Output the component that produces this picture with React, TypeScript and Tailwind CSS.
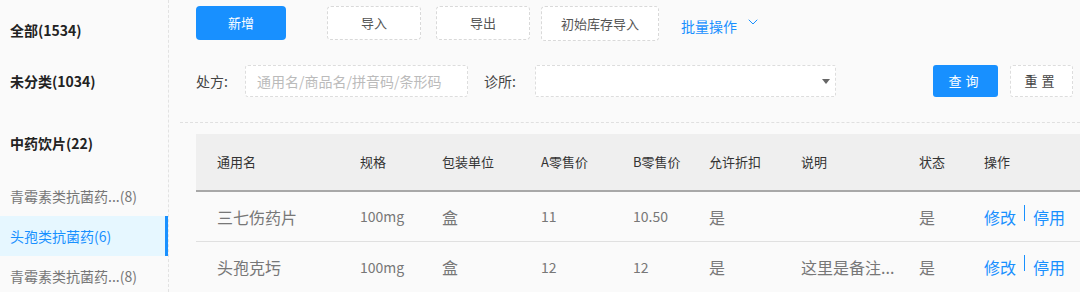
import { ChevronDown } from 'lucide-react';

const categories = [
    { label: '全部(1534)', bold: true, h: 'h-[51px]' },
    { label: '未分类(1034)', bold: true, h: 'h-[51px]' },
];

const rows = [
    { name: '三七伤药片', spec: '100mg', unit: '盒', a: '11', b: '10.50', discount: '是', note: '', status: '是' },
    { name: '头孢克圬', spec: '100mg', unit: '盒', a: '12', b: '12', discount: '是', note: '这里是备注...', status: '是' },
];

export default function App() {
    return (
        <div
            className="flex h-[292px] w-[1080px] overflow-hidden bg-[#fafafa] text-[#333]"
            style={{ fontFamily: '"Noto Sans CJK SC", "Noto Sans", sans-serif' }}
        >
            {/* Sidebar */}
            <aside className="w-[169px] shrink-0 border-r border-dashed border-[#e2e2e2] pt-[5px]">
                {categories.map((c) => (
                    <div key={c.label} className={`${c.h} flex items-center pl-[10px] text-[14px] font-bold text-[#222]`}>
                        {c.label}
                    </div>
                ))}
                <div className="mt-[11px] flex h-[51px] items-center pl-[10px] text-[14px] font-bold text-[#222]">中药饮片(22)</div>
                <div className="mt-[7px] flex h-[40px] items-center pl-[10px] text-[14px] text-[#777]">青霉素类抗菌药...(8)</div>
                <div className="flex h-[40px] items-center border-r-[3px] border-[#1890ff] bg-[#e6f7ff] pl-[10px] text-[14px] text-[#1890ff]">
                    头孢类抗菌药(6)
                </div>
                <div className="flex h-[40px] items-center pl-[10px] text-[14px] text-[#777]">青霉素类抗菌药...(8)</div>
            </aside>

            {/* Main */}
            <main className="flex-1 pl-[11px]">
                {/* Toolbar */}
                <div className="flex h-[46px] items-start pl-[16px] pt-[6px]">
                    <button className="h-[34px] w-[90px] rounded-[4px] bg-[#1890ff] text-[13px] text-white">新增</button>
                    <button className="ml-[41px] h-[34px] w-[94px] rounded-[4px] border border-dashed border-[#d9d9d9] bg-white text-[13px] text-[#555]">导入</button>
                    <button className="ml-[15px] h-[34px] w-[94px] rounded-[4px] border border-dashed border-[#d9d9d9] bg-white text-[13px] text-[#555]">导出</button>
                    <button className="ml-[11px] h-[35px] w-[118px] rounded-[4px] border border-dashed border-[#d9d9d9] bg-white text-[13px] text-[#555]">初始库存导入</button>
                    <div className="ml-[22px] flex h-[40px] items-center text-[14px] text-[#1890ff]">
                        批量操作
                        <ChevronDown className="ml-[8px] -mt-[8px] h-[16px] w-[16px]" strokeWidth={1.5} />
                    </div>
                </div>

                {/* Filter */}
                <div className="mt-[19px] flex h-[32px] items-center pl-[16px]">
                    <span className="w-[49px] text-[14px] text-[#444]">处方:</span>
                    <input
                        className="h-[32px] w-[223px] rounded-[3px] border border-dashed border-[#ddd] bg-white px-[11px] text-[14px] placeholder-[#bbb] outline-none"
                        placeholder="通用名/商品名/拼音码/条形码"
                    />
                    <span className="ml-[16px] w-[51px] text-[14px] text-[#444]">诊所:</span>
                    <div className="flex h-[32px] w-[301px] items-center justify-end rounded-[2px] border border-dashed border-[#ddd] bg-white pr-[5px]">
                        <span className="h-0 w-0 border-x-[4px] border-t-[5px] border-x-transparent border-t-[#666]" />
                    </div>
                    <button className="ml-[97px] h-[32px] w-[65px] rounded-[3px] bg-[#1890ff] text-[13px] tracking-[4px] text-white">查询</button>
                    <button className="ml-[12px] h-[32px] w-[63px] rounded-[3px] border border-dashed border-[#ddd] bg-white text-[13px] tracking-[4px] text-[#444]">重置</button>
                </div>

                {/* Divider */}
                <div className="mt-[25px] border-t border-dashed border-[#e0e0e0]" />

                {/* Table */}
                <div className="ml-[16px] mt-[11px]">
                    <div className="flex h-[58px] items-center border-b-[2px] border-[#a8a8a8] bg-[#efefef] text-[13px] text-[#333]">
                        <div className="w-[164px] pl-[21px]">通用名</div>
                        <div className="w-[82px]">规格</div>
                        <div className="w-[99px]">包装单位</div>
                        <div className="w-[92px]">A零售价</div>
                        <div className="w-[76px]">B零售价</div>
                        <div className="w-[92px]">允许折扣</div>
                        <div className="w-[118px]">说明</div>
                        <div className="w-[65px]">状态</div>
                        <div>操作</div>
                    </div>
                    {rows.map((r, i) => (
                        <div
                            key={r.name}
                            className={`flex h-[50px] items-center text-[16px] text-[#777] ${i === 0 ? 'border-b border-[#e0e0e0]' : ''}`}
                        >
                            <div className="w-[164px] pl-[21px]">{r.name}</div>
                            <div className="w-[82px] text-[14px]">{r.spec}</div>
                            <div className="w-[99px]">{r.unit}</div>
                            <div className="w-[92px] text-[14px]">{r.a}</div>
                            <div className="w-[76px] text-[14px]">{r.b}</div>
                            <div className="w-[92px]">{r.discount}</div>
                            <div className="w-[118px]">{r.note}</div>
                            <div className="w-[65px]">{r.status}</div>
                            <div className="flex items-center text-[16px] text-[#1890ff]">
                                <span>修改</span>
                                <span className="mx-[8px] -mt-[8px] h-[16px] w-px bg-[#1890ff]" />
                                <span>停用</span>
                            </div>
                        </div>
                    ))}
                </div>
            </main>
        </div>
    );
}
